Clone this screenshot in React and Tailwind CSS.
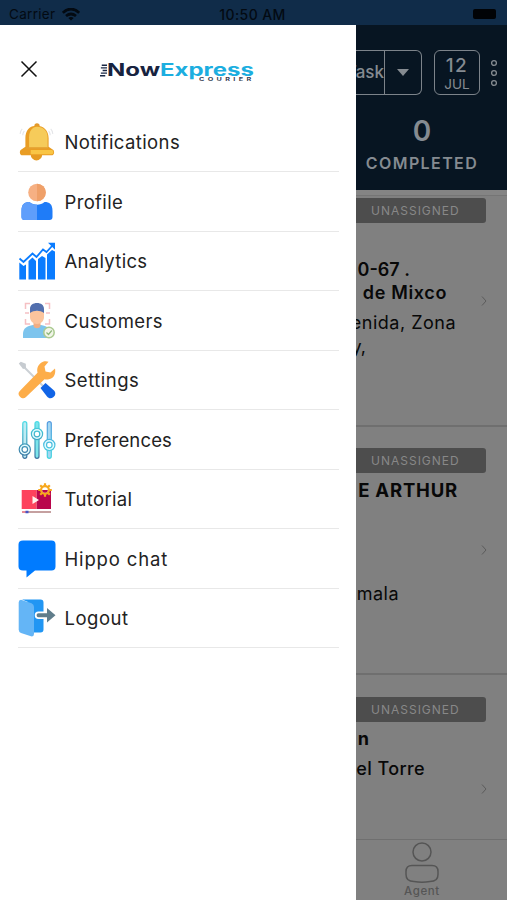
import React from "react";

function Bell() {
  return (
    <svg viewBox="1 0.500 36 36" className="h-[38px] w-[38px]">
      <path d="M5 6Q3 8 3 11M7 8Q5.500 10 5.500 12M32 6Q34 8 34 11M30 8Q31.500 10 31.500 12" fill="none" stroke="#e4e5e8" strokeWidth="1" />
      <path d="M13 30h11a5.500 6 0 0 1-11 0z" fill="#e69b22" />
      <circle cx="19" cy="3.200" r="2.500" fill="#e39a2c" />
      <path d="M8 15C8 7 12 3 18.500 3S30 7 30 15v8l4.500 3c1.500 2 .5 5-1.500 5H5c-2 0-3-3-1.500-5L8 23z" fill="#e99d24" />
      <path d="M11.500 14c0-6 3-10 7.500-10 6 0 10 4 10 10v10H11.500z" fill="#f6cb5a" />
      <path d="M13 26h20c2 0 2 4 0 4H13z" fill="#f9c544" />
      <path d="M9 23.500h20v1.500H8z" fill="#e4a030" />
    </svg>
  );
}

function Profile() {
  return (
    <svg viewBox="0 0 38 38" className="h-[38px] w-[38px]">
      <path d="M3.500 28c0-7 3-9 8-9 4 3.500 11 3.500 15 0 5 0 8 2 8 9v6q0 3-3 3h-25q-3 0-3-3z" fill="#1f7cf8" />
      <path d="M3.500 28c0-7 3-9 8-9 2 1.800 4.500 2.600 7.500 2.600V37H6.500q-3 0-3-3z" fill="#5f9efb" />
      <circle cx="19" cy="9.500" r="8.800" fill="#f6b083" />
      <path d="M19 .7a8.800 8.800 0 0 1 0 17.600z" fill="#efa069" />
    </svg>
  );
}

function Analytics() {
  return (
    <svg viewBox="0 0 38 38" className="h-[38px] w-[38px]" fill="#0a7cff">
      <path d="M1.300 20.500l4.200 3.500 2.500-1.500v15H1.300zM10.500 19l4-3.500 3.500 3.500v18.500h-7.500zM20 17l4-3 3.500 2v21.500H20zM29 12.500l5-4.500 3 1.500v28H29z" />
      <path d="M1.500 16.500l4 3.500L14.500 11.500l4 3.500L25 7.500l3.500 2.500L34 4" fill="none" stroke="#0a7cff" strokeWidth="1.800" />
      <path d="M30 .8h7v7z" />
    </svg>
  );
}

function Customers() {
  return (
    <svg viewBox="0 0 38 38" className="h-[38px] w-[38px]">
      <path d="M12 1.500H7.500V7M27 1.500h4.500V7M7.500 17v5H12M31.500 17v5H27M7 11h4M28 11h4" fill="none" stroke="#f5c0c3" strokeWidth="1.500" />
      <path d="M5 36v-4c0-6 4-8 10-9h8c6 1 9 3 9 9v4z" fill="#7dc4ed" />
      <path d="M15.500 19h7v5c-1 3-6 3-7 0z" fill="#f1ae84" />
      <path d="M12 9h14v6c0 4-3 7-7 7s-7-3-7-7z" fill="#fcc49d" />
      <path d="M12 11V7c0-4 3-6 7-6s7 2 7 6v4c-4-3-10-3-14 0z" fill="#526fae" />
      <circle cx="31" cy="30.500" r="5.200" fill="#f1f5e8" stroke="#abca91" strokeWidth="1.500" />
      <path d="M28.500 30.500l2 2 3.300-4" fill="none" stroke="#8fb77b" strokeWidth="1.200" />
    </svg>
  );
}

function Settings() {
  return (
    <svg viewBox="0 0 38 38" className="h-[38px] w-[38px]">
      <path d="M5 5l20 20" stroke="#cbd0d5" strokeWidth="2" />
      <path d="M.8 2.500l2-1.800 5 2L8 7 5 8z" fill="#c6cbd0" />
      <path d="M22.500 27l5-5 8.500 7.500c2 2 1.500 5-.5 6.500s-4.500 2-6.500-.5z" fill="#1164e6" />
      <path d="M25 .8c2-.8 4-.6 5.500 0l-4 4.700 1 5 5 1 4.500-4c1 5-1 9-4 10-3 1.500-5 1-6.500.7L8 36c-2 2-4 1.500-6-.3-2-2-2-4 0-6l17.500-18c-1.200-5 1.300-9 5.500-10.900z" fill="#fdad49" />
    </svg>
  );
}

function Preferences() {
  return (
    <svg viewBox="0 0 38 38" className="h-[38px] w-[38px]" fill="none">
      <defs>
        <linearGradient id="slider-left" x1="0" y1="0" x2="0" y2="38" gradientUnits="userSpaceOnUse">
          <stop stopColor="#47dee7" /><stop offset="1" stopColor="#3c709e" />
        </linearGradient>
        <linearGradient id="slider-right" x1="0" y1="0" x2="0" y2="38" gradientUnits="userSpaceOnUse">
          <stop stopColor="#5397df" /><stop offset="1" stopColor="#43d7df" />
        </linearGradient>
      </defs>
      <g stroke="url(#slider-left)" strokeWidth="1.200">
        <rect x="4.800" y=".7" width="4" height="36.600" rx="2" fill="#bdebf3" />
        <circle cx="6.800" cy="28.500" r="5.600" fill="#e4fbff" /><circle cx="6.800" cy="28.500" r="2.800" fill="#fff" />
        <rect x="17" y=".7" width="4" height="36.600" rx="2" fill="#7de5eb" />
        <circle cx="19" cy="13" r="5.600" fill="#e4fbff" /><circle cx="19" cy="13" r="2.800" fill="#fff" />
      </g>
      <g stroke="url(#slider-right)" strokeWidth="1.200">
        <rect x="29.300" y=".7" width="4" height="36.600" rx="2" fill="#a4d7f2" />
        <circle cx="31.300" cy="24" r="5.600" fill="#e4fbff" /><circle cx="31.300" cy="24" r="2.800" fill="#fff" />
      </g>
    </svg>
  );
}

function Tutorial() {
  return (
    <svg viewBox="0 0 38 38" className="h-[38px] w-[38px]">
      <path d="M3.700 10h15v19h-15z" fill="#fd425d" />
      <path d="M18.700 10H33v19H18.700z" fill="#b9054c" />
      <path d="M14.500 16l6.500 4-6.500 4z" fill="#fff1ed" />
      <path d="M4 32h29" stroke="#c5a0a0" strokeWidth="2" />
      <path d="M4 32h4" stroke="#e88a95" strokeWidth="2" /><path d="M7.500 32h3" stroke="#4653c5" strokeWidth="2.500" />
      <path d="M27 3.200v2.500M27 14.300v2.500M20.200 10h2.500M31.300 10h2.500M22.200 5.200l1.800 1.800M30 13l1.800 1.800M22.200 14.800L24 13M30 7l1.800-1.800" stroke="#f7a81d" strokeWidth="2.200" />
      <circle cx="27" cy="10" r="3.900" fill="#fff" stroke="#f7a81d" strokeWidth="2.200" />
      <path d="M24.200 10h5.600a2.800 2.800 0 0 1-5.600 0z" fill="#b9054c" />
    </svg>
  );
}

function Chat() {
  return (
    <svg viewBox="0 0 38 38" className="h-[38px] w-[38px]">
      <path d="M5 .5h28.500q4 0 4 4v22q0 4-4 4H17L8.500 37.500v-7H5q-4.500 0-4.500-4v-22q0-4 4.500-4z" fill="#007bff" />
    </svg>
  );
}

function Logout() {
  return (
    <svg viewBox="0 0 38 38" className="h-[38px] w-[38px]">
      <path d="M4 .5h18.500q3 0 3 3v27q0 3-3 3H10V3z" fill="#2196f3" />
      <path d="M3 .7l10.500 3.600q2.500 1 2.500 3.500V35q0 3-3 2.300L3 34Q.7 33 .7 30.500v-27Q.7 1 3 .7z" fill="#64b5f6" />
      <path d="M20.500 14.300h8.500V9L37.500 16.200l-8.500 7.300V18.200h-8.500a1.950 1.950 0 0 1 0-3.900z" fill="#607d8b" stroke="#fff" strokeWidth="3.600" strokeLinejoin="round" paintOrder="stroke" />
    </svg>
  );
}

const items = [
  ["Notifications", Bell, "tracking-[0.4px]"],
  ["Profile", Profile, "tracking-[0.35px]"],
  ["Analytics", Analytics, "tracking-[0.3px]"],
  ["Customers", Customers, "tracking-[0.4px]"],
  ["Settings", Settings, "tracking-[0.5px]"],
  ["Preferences", Preferences, "tracking-[0.15px]"],
  ["Tutorial", Tutorial, "tracking-[0.35px]"],
  ["Hippo chat", Chat, "tracking-[0.85px]"],
  ["Logout", Logout, "tracking-[0.5px]"],
];

function StatusBar() {
  return (
    <header className="grid h-[25px] shrink-0 grid-cols-3 items-center bg-[#102c49] pt-[3px] pr-[11px] pl-[9px] text-[#030a12]">
      <div className="flex items-center gap-[7px] text-[13.5px] tracking-[0.3px]">
        Carrier
        <svg viewBox="0 0 18 13" className="h-[13px] w-[18px]" fill="none" stroke="currentColor" strokeWidth="2.800">
          <path d="M.8 4.800Q9-2.600 17.200 4.800M4 8q5-4 10 0" />
          <path d="M9 12.500L6.300 10Q9 8 11.700 10z" fill="currentColor" stroke="none" />
        </svg>
      </div>
      <div className="text-center text-[14px] font-medium tracking-[0.4px] whitespace-nowrap">10:50 AM</div>
      <div className="flex justify-end"><div className="h-[10px] w-[23px] rounded-[2px] bg-[#010306]" /></div>
    </header>
  );
}

function Logo() {
  return (
    <div className="ml-[62px] flex h-[20px] items-start pt-[5px]">
      <svg viewBox="0 0 8 14" className="h-[13px] w-[7px] shrink-0" stroke="#182744" strokeWidth="1.500">
        <path d="M2 1h6M1 4h7M3 7h5M1 10h7M0 13h6" />
      </svg>
      <div className="flex flex-col">
        <div className="h-[13px] origin-left scale-x-[1.410] text-[17px] leading-[12px] font-bold whitespace-nowrap text-[#17233f]">
          Now<span className="text-[#1caee0]">Express</span>
        </div>
        <div className="ml-[92px] h-[5px] origin-left scale-x-[1.450] text-[5px] leading-[5px] font-bold tracking-[2.300px] text-[#354155]">COURIER</div>
      </div>
    </div>
  );
}

function Drawer() {
  return (
    <aside className="w-[356px] shrink-0 bg-white">
      <div className="flex h-[87.5px] items-center pl-[20px]">
        <svg viewBox="0 0 18 18" className="h-[18px] w-[18px]" stroke="#111" strokeWidth="1.500">
          <path d="M1.500 1.500l15 15M16.500 1.500l-15 15" />
        </svg>
        <Logo />
      </div>
      <nav className="ml-[18px] w-[321px]">
        {items.map(([name, Icon, spacing]) => (
          <div key={name} className="flex h-[59.5px] items-center border-b border-[#e8e8e8] pt-px">
            <Icon />
            <span className={"ml-[8.500px] pt-[2px] text-[18.5px] text-[#222] " + spacing}>{name}</span>
          </div>
        ))}
      </nav>
    </aside>
  );
}

function Header() {
  return (
    <div className="h-[165px] shrink-0 bg-[#071522] text-[#858b91]">
      <div className="flex h-[95px] items-center">
        <div className="flex h-[45px] w-[66px] shrink-0 rounded-r-[6px] border border-l-0 border-[#7c838a]">
          <div className="flex w-[28px] items-center justify-end overflow-hidden text-[17px] font-medium">Task</div>
          <div className="flex flex-1 items-center justify-center border-l border-[#7c838a]">
            <svg viewBox="0 0 12 7" className="h-[7px] w-[12px]" fill="currentColor"><path d="M0 0h12L6 7z" /></svg>
          </div>
        </div>
        <div className="ml-[12px] flex h-[45px] w-[46px] shrink-0 flex-col items-center rounded-[6px] border border-[#7c838a] pt-[4px]">
          <div className="text-[19px] leading-[21px] font-medium tracking-[1.500px]">12</div>
          <div className="text-[13.5px] leading-[17px]">JUL</div>
        </div>
        <svg viewBox="0 0 8 28" className="ml-[10px] h-[28px] w-[8px] shrink-0" fill="none" stroke="currentColor" strokeWidth="1.300">
          <circle cx="4" cy="4" r="2.400" /><circle cx="4" cy="14" r="2.400" /><circle cx="4" cy="24" r="2.400" />
        </svg>
      </div>
      <div className="w-[132px] text-center">
        <div className="h-[32px] text-[28px] leading-[22px] font-semibold">0</div>
        <div className="text-[16px] leading-[23px] font-semibold tracking-[1.400px]">COMPLETED</div>
      </div>
    </div>
  );
}

function Badge() {
  return (
    <div className="flex h-[25px] w-[130px] items-center rounded-r-[3px] bg-[#4d4d4d] pt-px pl-[15px] text-[12px] tracking-[1px] text-[#888]">UNASSIGNED</div>
  );
}

function Chevron() {
  return (
    <svg viewBox="0 0 6 10" className="mr-[20px] h-[10px] w-[6px] shrink-0" fill="none" stroke="#5b5b5b" strokeWidth="1"><path d="M1 .5l4 4.500-4 4.500" /></svg>
  );
}

function Line({ right, className, children }) {
  return (
    <div className="flex justify-end overflow-hidden" style={{ width: right }}>
      <span className={"shrink-0 whitespace-nowrap " + className}>{children}</span>
    </div>
  );
}

function Tasks() {
  return (
    <main className="flex w-[151px] flex-col overflow-hidden bg-[#808080] text-[#080808]">
      <Header />
      <div className="h-[6px] shrink-0 border-b border-[#757575] bg-[#848484]" />
      <section className="h-[231px] shrink-0 border-b-2 border-[#6f6f6f] pt-[2px]">
        <Badge />
        <div className="flex items-center justify-between pt-[35px]">
          <div>
            <Line right={54} className="text-[18px] leading-[23px] font-semibold">0-67 .</Line>
            <Line right={91} className="text-[18px] leading-[23px] font-semibold tracking-[0.650px]">de Mixco</Line>
            <Line right={100} className="pt-[7px] text-[18px] leading-[24px] tracking-[0.500px]">enida, Zona</Line>
            <Line right={10} className="text-[18px] leading-[24px]">y,</Line>
          </div>
          <div className="pb-[15px]"><Chevron /></div>
        </div>
      </section>
      <section className="h-[248px] shrink-0 border-b-2 border-[#6f6f6f] pt-[20.5px]">
        <Badge />
        <Line right={102} className="pt-[5px] text-[18.5px] leading-[24px] font-bold tracking-[0.800px]">E ARTHUR</Line>
        <div className="flex justify-end pt-[43.5px]"><Chevron /></div>
        <Line right={43} className="pt-[27px] text-[18px] leading-[24px] tracking-[0.500px]">mala</Line>
      </section>
      <section className="h-[165px] shrink-0 border-b border-[#6f6f6f] pt-[21.5px]">
        <Badge />
        <Line right={13} className="pt-[5px] text-[18px] leading-[24px] font-bold">n</Line>
        <Line right={69} className="pt-[6px] text-[18px] leading-[24px] font-medium tracking-[0.400px]">el Torre</Line>
        <div className="flex justify-end pt-[3px]"><Chevron /></div>
      </section>
      <footer className="flex w-[132px] flex-1 flex-col items-center pt-[2px] text-[#555]">
        <svg viewBox="0 0 36 42" className="h-[42px] w-[36px] shrink-0" fill="none" stroke="currentColor" strokeWidth="1.500">
          <circle cx="18" cy="10" r="9" />
          <path d="M8 23.500h20q6 0 6 6v3c0 5-3 7-8 7-5 .8-11 .8-16 0-5 0-8-2-8-7v-3q0-6 6-6z" />
        </svg>
        <div className="text-[11.5px] leading-[15px] font-medium tracking-[0.600px]">Agent</div>
      </footer>
    </main>
  );
}

export default function App() {
  return (
    <div className="flex h-[900px] w-[507px] flex-col overflow-hidden font-['Inter','Liberation_Sans',sans-serif]">
      <StatusBar />
      <div className="flex min-h-0 flex-1">
        <Drawer />
        <Tasks />
      </div>
    </div>
  );
}
